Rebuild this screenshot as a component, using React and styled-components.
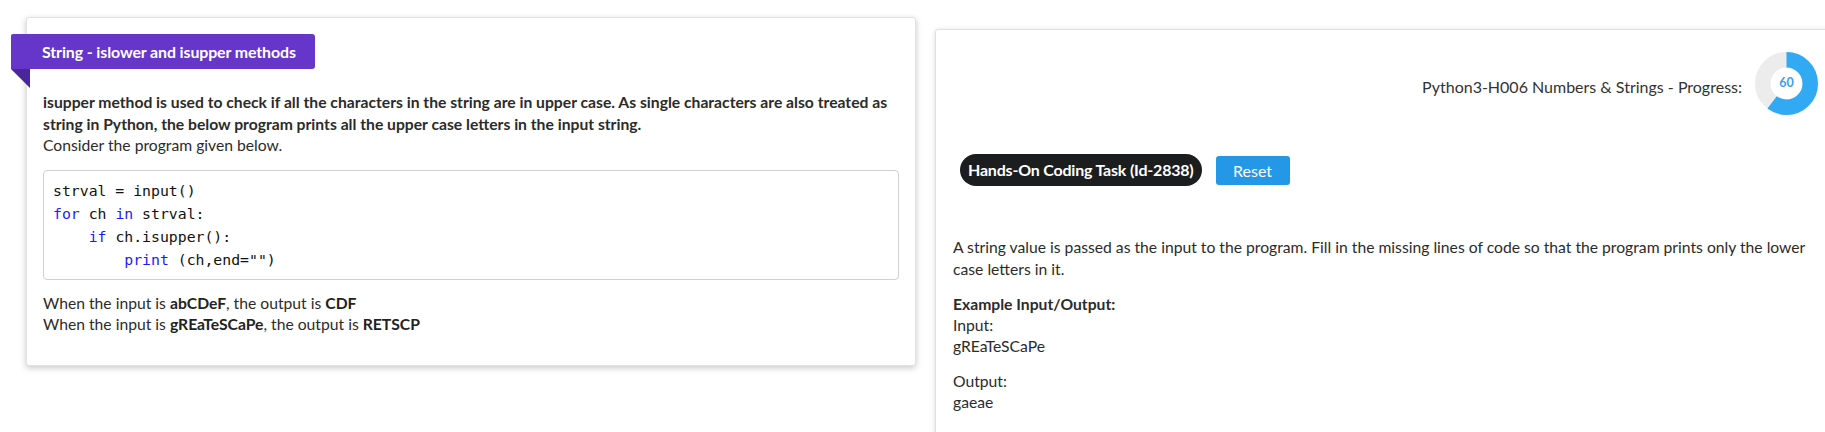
import React from "react";
import styled, { createGlobalStyle } from "styled-components";

const GlobalStyle = createGlobalStyle`
  html, body {
    margin: 0;
    padding: 0;
    background: #fff;
    overflow: hidden;
  }
  body {
    font-family: Lato, "Open Sans", sans-serif;
    color: #333;
  }
`;

const Page = styled.div`
  display: flex;
  align-items: flex-start;
  width: 1825px;
  height: 432px;
  overflow: hidden;
`;

const LeftColumn = styled.div`
  padding: 17px 0 0 26px;
  flex: 0 0 890px;
`;

const QuestionCard = styled.div`
  background: #fff;
  border: 1px solid #e2e2e2;
  border-radius: 3px;
  box-shadow: 0 2px 6px rgba(0, 0, 0, 0.22);
  padding: 16px 16px 30px 16px;
`;

const Ribbon = styled.div`
  position: relative;
  display: inline-block;
  margin-left: -32px;
  height: 35px;
  line-height: 35px;
  padding: 0 19px 0 31px;
  background: #6536c9;
  color: #fff;
  font-weight: 700;
  font-size: 15.9px;
  letter-spacing: -0.1px;
  border-radius: 2px 3px 3px 0;

  &::after {
    content: "";
    position: absolute;
    left: 0;
    top: 35px;
    border-style: solid;
    border-width: 0 19px 19px 0;
    border-color: transparent #4a2799 transparent transparent;
  }
`;

const Paragraph = styled.p`
  margin: ${(p) => p.$margin || "0"};
  font-size: 15.7px;
  line-height: 21.5px;
  color: #2b2b2b;
  font-weight: ${(p) => (p.$bold ? 700 : 400)};
`;

const CodeBox = styled.div`
  margin-top: 13px;
  padding: 8px 9px;
  border: 1px solid #d0d0d0;
  border-radius: 4px;
  font-family: "DejaVu Sans Mono", "Liberation Mono", monospace;
  font-size: 14.8px;
  color: #111;
`;

const CodeLine = styled.div`
  height: 23px;
  line-height: 23px;
  white-space: pre;
`;

const Kw = styled.span`
  color: #1a1aff;
`;

const ResultBlock = styled.div`
  margin-top: 13px;
  font-size: 15.7px;
  line-height: 21px;
  color: #2b2b2b;

  b {
    font-weight: 700;
    color: #222;
  }
`;

const TaskCard = styled.div`
  flex: 0 0 900px;
  margin: 29px 0 0 19px;
  min-height: 440px;
  background: #fff;
  border: 1px solid #e0e0e0;
  border-radius: 3px;
  box-shadow: 0 1px 5px rgba(0, 0, 0, 0.15);
  padding: 22px 0 0 17px;
`;

const ProgressRow = styled.div`
  display: flex;
  align-items: center;
  justify-content: flex-end;
  gap: 13px;
  width: 865px;
`;

const ProgressLabel = styled.span`
  font-size: 16px;
  color: #333;
  margin-top: 6px;
`;

const DonutWrap = styled.div`
  position: relative;
  width: 63px;
  height: 63px;
`;

const DonutValue = styled.span`
  position: absolute;
  inset: 0;
  display: flex;
  align-items: center;
  justify-content: center;
  font-size: 12.5px;
  font-weight: 700;
  color: #3aa0ee;
  margin-top: -2px;
`;

const ActionRow = styled.div`
  display: flex;
  align-items: center;
  gap: 14px;
  margin: 39px 0 0 7px;
`;

const TaskPill = styled.span`
  display: inline-block;
  height: 32px;
  line-height: 32px;
  padding: 0 8px;
  border-radius: 16px;
  background: #1c1d1f;
  color: #fff;
  font-weight: 700;
  font-size: 16px;
  letter-spacing: -0.2px;
`;

const ResetButton = styled.button`
  height: 29px;
  width: 74px;
  border: none;
  border-radius: 3px;
  background: #2497e6;
  color: #fff;
  font-family: Lato, sans-serif;
  font-size: 16px;
  cursor: pointer;
`;

const TaskText = styled.div`
  margin-top: 50px;
  width: 865px;
  font-size: 15.7px;
  line-height: 22px;
  color: #2b2b2b;
`;

const Line = styled.div`
  margin-top: ${(p) => p.$gap || 0}px;
  font-weight: ${(p) => (p.$bold ? 700 : 400)};
  line-height: 21px;
`;

function Donut({ value }) {
  const r = 23.75;
  const c = 2 * Math.PI * r;
  return (
    <DonutWrap>
      <svg width="63" height="63" viewBox="0 0 63 63">
        <circle cx="31.5" cy="31.5" r={r} fill="none" stroke="#ececec" strokeWidth="15.5" />
        <circle
          cx="31.5"
          cy="31.5"
          r={r}
          fill="none"
          stroke="#31a9f3"
          strokeWidth="15.5"
          strokeDasharray={`${(c * value) / 100} ${c}`}
          transform="rotate(-90 31.5 31.5)"
        />
      </svg>
      <DonutValue>{value}</DonutValue>
    </DonutWrap>
  );
}

export default function App() {
  return (
    <>
      <GlobalStyle />
      <Page>
        <LeftColumn>
          <QuestionCard>
            <Ribbon>String - islower and isupper methods</Ribbon>
            <Paragraph $bold $margin="23px 0 0 0">
              isupper method is used to check if all the characters in the string are in upper case. As single
              characters are also treated as string in Python, the below program prints all the upper case letters in
              the input string.
            </Paragraph>
            <Paragraph>Consider the program given below.</Paragraph>
            <CodeBox>
              <CodeLine>strval = input()</CodeLine>
              <CodeLine>
                <Kw>for</Kw> ch <Kw>in</Kw> strval:
              </CodeLine>
              <CodeLine>
                {"    "}
                <Kw>if</Kw> ch.isupper():
              </CodeLine>
              <CodeLine>
                {"        "}
                <Kw>print</Kw>
                {' (ch,end="")'}
              </CodeLine>
            </CodeBox>
            <ResultBlock>
              When the input is <b>abCDeF</b>, the output is <b>CDF</b>
              <br />
              When the input is <b>gREaTeSCaPe</b>, the output is <b>RETSCP</b>
            </ResultBlock>
          </QuestionCard>
        </LeftColumn>
        <TaskCard>
          <ProgressRow>
            <ProgressLabel>Python3-H006 Numbers &amp; Strings - Progress:</ProgressLabel>
            <Donut value={60} />
          </ProgressRow>
          <ActionRow>
            <TaskPill>Hands-On Coding Task (Id-2838)</TaskPill>
            <ResetButton>Reset</ResetButton>
          </ActionRow>
          <TaskText>
            A string value is passed as the input to the program. Fill in the missing lines of code so that the program
            prints only the lower case letters in it.
            <Line $bold $gap={14}>Example Input/Output:</Line>
            <Line>Input:</Line>
            <Line>gREaTeSCaPe</Line>
            <Line $gap={14}>Output:</Line>
            <Line>gaeae</Line>
          </TaskText>
        </TaskCard>
      </Page>
    </>
  );
}
